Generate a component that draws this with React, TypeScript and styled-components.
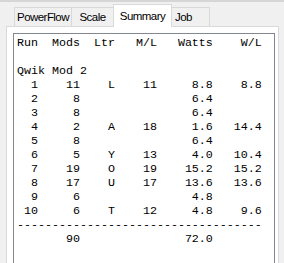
import React from 'react';
import styled, { createGlobalStyle } from 'styled-components';

const GlobalStyle = createGlobalStyle`
  html, body {
    margin: 0;
    padding: 0;
    background: #f0f0f0;
  }
  body {
    width: 284px;
    height: 263px;
    overflow: hidden;
  }
`;

const Frame = styled.div`
  height: 263px;
  box-sizing: border-box;
  border-top: 2px solid #d6d6d6;
  padding: 2px 5px 0 6px;
  display: flex;
  flex-direction: column;
  font-family: 'Liberation Sans', Arial, sans-serif;
`;

const TabStrip = styled.div`
  display: flex;
  align-items: flex-end;
  height: 22px;
  padding-left: 8px;
  position: relative;
  z-index: 1;
`;

const Tab = styled.div<{ $active?: boolean; $w: number; $shift?: number }>`
  box-sizing: border-box;
  width: ${p => p.$w}px;
  height: ${p => (p.$active ? 23 : 19)}px;
  margin-bottom: ${p => (p.$active ? -1 : 0)}px;
  margin-left: -1px;
  &:first-child {
    margin-left: 0;
  }
  border: 1px solid #d9d9d9;
  border-bottom: none;
  background: ${p => (p.$active ? '#ffffff' : '#f0f0f0')};
  display: flex;
  align-items: center;
  justify-content: center;
  padding-bottom: ${p => (p.$active ? 1 : 0)}px;
  padding-right: ${p => p.$shift ?? 0}px;
  font-size: 11.5px;
  letter-spacing: -0.55px;
  color: #000;
  position: relative;
  z-index: ${p => (p.$active ? 2 : 1)};
`;

const Page = styled.div`
  flex: 1;
  min-height: 0;
  background: #ffffff;
  border: 1px solid #d9d9d9;
  border-bottom: none;
  padding: 6px 3px 0 6px;
  display: flex;
  flex-direction: column;
`;

const TextBox = styled.div`
  flex: 1;
  min-height: 0;
  border: 1px solid #828790;
  border-bottom: none;
  background: #ffffff;
  overflow: hidden;
`;

const Listing = styled.pre`
  margin: 0;
  padding: 2px 0 0 3px;
  font-family: 'Liberation Mono', 'Courier New', monospace;
  font-size: 11.67px;
  line-height: 14px;
  color: #000;
`;

type Run = [string, string, string, string, string, string];

const runs: Run[] = [
  ['1', '11', 'L', '11', '8.8', '8.8'],
  ['2', '8', '', '', '6.4', ''],
  ['3', '8', '', '', '6.4', ''],
  ['4', '2', 'A', '18', '1.6', '14.4'],
  ['5', '8', '', '', '6.4', ''],
  ['6', '5', 'Y', '13', '4.0', '10.4'],
  ['7', '19', 'O', '19', '15.2', '15.2'],
  ['8', '17', 'U', '17', '13.6', '13.6'],
  ['9', '6', '', '', '4.8', ''],
  ['10', '6', 'T', '12', '4.8', '9.6'],
];

// column widths in characters, every field right aligned
const widths = [3, 6, 5, 6, 8, 7];

const formatRow = (cells: string[]) =>
  cells.map((c, i) => c.padStart(widths[i])).join('').replace(/\s+$/, '');

const lines = [
  'Run  Mods  Ltr   M/L   Watts    W/L',
  '',
  'Qwik Mod 2',
  ...runs.map(formatRow),
  '-'.repeat(35),
  formatRow(['', '90', '', '', '72.0', '']),
];

const tabs = [
  { label: 'PowerFlow', w: 58 },
  { label: 'Scale', w: 43 },
  { label: 'Summary', w: 59, active: true },
  { label: 'Job', w: 39, shift: 14 },
];

export default function App() {
  return (
    <>
      <GlobalStyle />
      <Frame>
        <TabStrip>
          {tabs.map(t => (
            <Tab key={t.label} $w={t.w} $active={t.active} $shift={t.shift}>
              {t.label}
            </Tab>
          ))}
        </TabStrip>
        <Page>
          <TextBox>
            <Listing>{lines.join('\n')}</Listing>
          </TextBox>
        </Page>
      </Frame>
    </>
  );
}
